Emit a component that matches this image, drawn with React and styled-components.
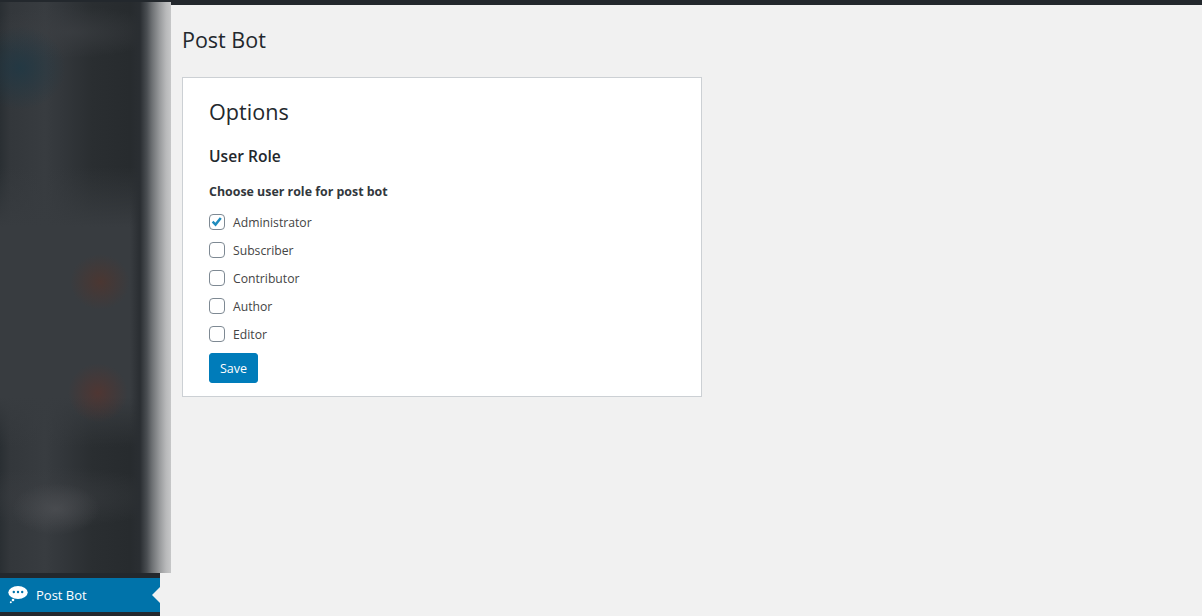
import React from 'react';
import styled, { createGlobalStyle } from 'styled-components';

const GlobalStyle = createGlobalStyle`
  html, body {
    margin: 0;
    padding: 0;
    background: #f1f1f1;
    font-family: "Open Sans", "Noto Sans", sans-serif;
    color: #23282d;
  }
`;

const Page = styled.div`
  display: flex;
  width: 1202px;
  height: 616px;
  overflow: hidden;
  position: relative;
`;

const TopBar = styled.div`
  position: absolute;
  top: 0;
  left: 0;
  right: 0;
  height: 5px;
  background: #23282d;
`;

const Sidebar = styled.aside`
  width: 160px;
  flex-shrink: 0;
  background: #23282d;
  display: flex;
  flex-direction: column;
  justify-content: flex-end;
  padding-bottom: 4px;
  box-sizing: border-box;
  position: relative;
`;

// the blurred out admin menu that lies over the sidebar
const BlurPanel = styled.div`
  position: absolute;
  top: 2px;
  left: 0;
  width: 171px;
  height: 571px;
  background:
    linear-gradient(to right,
      rgba(42, 46, 50, 0) 130px, #2a2e32 140px, #4a4e52 147px, #6d7073 152px,
      #9a9c9e 160px, #b8b9ba 166px, #c6c7c8 171px),
    radial-gradient(ellipse 30px 30px at 98px 391px, rgba(94, 50, 42, 0.6), rgba(94, 50, 42, 0)),
    radial-gradient(ellipse 30px 28px at 100px 280px, rgba(90, 50, 38, 0.55), rgba(90, 50, 38, 0)),
    radial-gradient(ellipse 46px 42px at 20px 66px, rgba(28, 56, 70, 0.7), rgba(28, 56, 70, 0)),
    radial-gradient(ellipse 44px 26px at 56px 507px, rgba(80, 82, 86, 0.7), rgba(80, 82, 86, 0)),
    radial-gradient(ellipse 90px 26px at 70px 30px, rgba(60, 63, 67, 0.7), rgba(60, 63, 67, 0)),
    radial-gradient(ellipse 110px 30px at 60px 495px, rgba(60, 63, 67, 0.6), rgba(60, 63, 67, 0)),
    linear-gradient(to bottom,
      rgba(56, 60, 64, 0) 165px, rgba(56, 60, 64, 1) 225px, rgba(56, 60, 64, 1) 395px,
      rgba(56, 60, 64, 0) 445px),
    linear-gradient(to right, #2a2f33 0, #33373b 10px, #383c40 45px, #33373b 62px, #2a2e31 92px, #272b2e 130px);
`;

const MenuItem = styled.div`
  height: 34px;
  background: #0073aa;
  color: #fff;
  display: flex;
  align-items: center;
  gap: 8px;
  padding-left: 8px;
  font-size: 13px;
  position: relative;
`;

const MenuArrow = styled.span`
  position: absolute;
  right: 0;
  top: 9px;
  width: 0;
  height: 0;
  border: 8px solid transparent;
  border-right-color: #f1f1f1;
  border-left-width: 0;
`;

const Main = styled.main`
  flex: 1;
  padding: 24px 0 0 22px;
`;

const PageTitle = styled.h1`
  margin: 0 0 22px;
  font-size: 21.5px;
  font-weight: 400;
  line-height: 31px;
`;

const Card = styled.section`
  width: 520px;
  height: 320px;
  box-sizing: border-box;
  background: #fff;
  border: 1px solid #ccd0d4;
  padding: 18px 26px 0;
`;

const CardTitle = styled.h2`
  margin: 0 0 17px;
  font-size: 21.6px;
  font-weight: 400;
  line-height: 31px;
`;

const SectionTitle = styled.h3`
  margin: 0 0 15px;
  font-size: 15.6px;
  font-weight: 600;
  line-height: 24px;
`;

const GroupLabel = styled.div`
  font-size: 12.4px;
  font-weight: 700;
  line-height: 18px;
  color: #32373c;
  margin-bottom: 7px;
`;

const RoleList = styled.div`
  display: flex;
  flex-direction: column;
`;

const RoleRow = styled.label`
  display: flex;
  align-items: center;
  gap: 8px;
  height: 28px;
  font-size: 12.2px;
  color: #444;
`;

const CheckBox = styled.span`
  width: 16px;
  height: 16px;
  box-sizing: border-box;
  border: 1px solid #7e8993;
  border-radius: 4px;
  background: #fff;
  display: flex;
  align-items: center;
  justify-content: center;
`;

const SaveButton = styled.button`
  display: block;
  margin-top: 5px;
  width: 49px;
  height: 30px;
  padding: 0;
  border: 1px solid #007cba;
  border-radius: 3px;
  background: #007cba;
  color: #fff;
  font-family: inherit;
  font-size: 12.5px;
`;

const BubbleIcon = () => (
  <svg width="20" height="20" viewBox="0 0 20 20">
    <ellipse cx="10" cy="7.5" rx="9.7" ry="6.4" fill="#fff" />
    <circle cx="5.8" cy="7" r="1.2" fill="#0073aa" />
    <circle cx="10" cy="7" r="1.2" fill="#0073aa" />
    <circle cx="14.200" cy="7" r="1.2" fill="#0073aa" />
    <circle cx="5" cy="15" r="1.3" fill="#fff" />
    <circle cx="2.800" cy="17.200" r="1" fill="#fff" />
  </svg>
);

const CheckMark = () => (
  <svg width="16" height="16" viewBox="0 0 16 16" fill="none">
    <path d="M3 7.700l3.300 3.300 6-7.600" stroke="#1e8cbe" strokeWidth="2.800" />
  </svg>
);

const roles = [
  { name: 'Administrator', checked: true },
  { name: 'Subscriber' },
  { name: 'Contributor' },
  { name: 'Author' },
  { name: 'Editor' },
];

const App = () => (
  <Page>
    <GlobalStyle />
    <TopBar />
    <Sidebar>
      <BlurPanel />
      <MenuItem>
        <BubbleIcon />
        Post Bot
        <MenuArrow />
      </MenuItem>
    </Sidebar>
    <Main>
      <PageTitle>Post Bot</PageTitle>
      <Card>
        <CardTitle>Options</CardTitle>
        <SectionTitle>User Role</SectionTitle>
        <GroupLabel>Choose user role for post bot</GroupLabel>
        <RoleList>
          {roles.map((role) => (
            <RoleRow key={role.name}>
              <CheckBox>{role.checked && <CheckMark />}</CheckBox>
              {role.name}
            </RoleRow>
          ))}
        </RoleList>
        <SaveButton>Save</SaveButton>
      </Card>
    </Main>
  </Page>
);

export default App;
